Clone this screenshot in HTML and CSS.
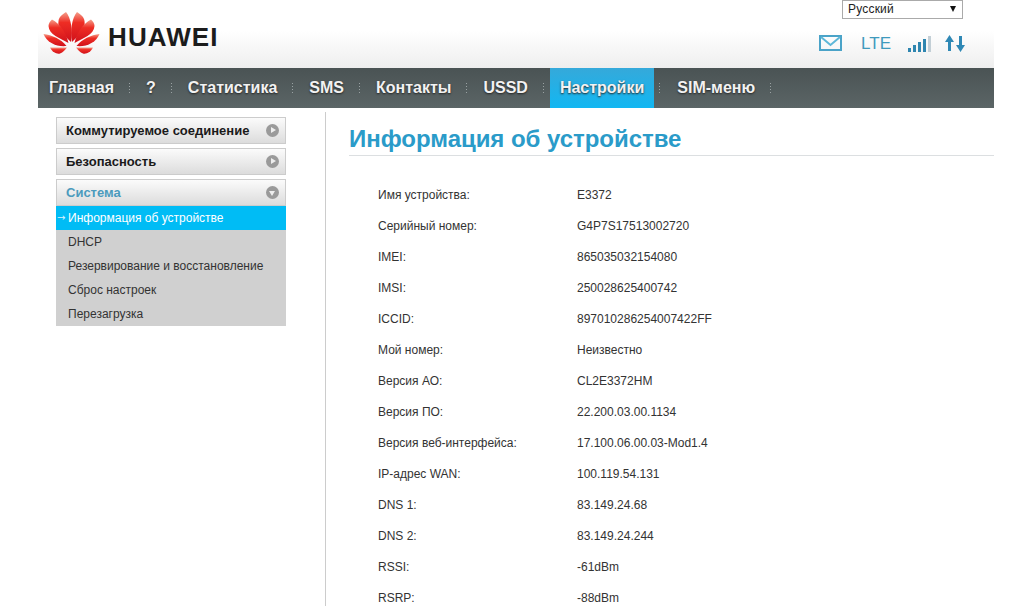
FILE: index.html
```html
<!DOCTYPE html>
<html lang="ru">
<head>
    <meta charset="UTF-8">
    <meta name="viewport" content="width=device-width, initial-scale=1.0">
    <title>Информация об устройстве - HUAWEI</title>
    <link rel="stylesheet" href="styles.css">
</head>
<body>
    <div class="page">
        <header class="header">
            <div class="brand">
                <svg class="logo" width="70" height="55" viewBox="0 0 70 55">
                    <defs>
                        <linearGradient id="petal" x1="0" y1="0" x2="0" y2="1">
                            <stop offset="0" stop-color="#f4a08c"/>
                            <stop offset="0.35" stop-color="#ee2d24"/>
                            <stop offset="1" stop-color="#d0111b"/>
                        </linearGradient>
                        <g id="half" fill="url(#petal)">
                            <path d="M33 37 C26 30 19 24 20.500 16 C21 12 24 9.500 28 7 C33 13 35 25 33 37Z"/>
                            <path d="M30.500 38 C22 33 11 30 10.500 21 C10.500 18.500 12 16.500 14 14.500 C22 19 28 27 30.500 38Z"/>
                            <path d="M28.500 41 C19 42 9 38 5.500 29 C14 30 23 34 28.500 41Z"/>
                            <path d="M29 42.500 L12 42.500 C14 47 19 49.500 22 48.500 C25 47.500 27 45 29 42.500Z"/>
                        </g>
                    </defs>
                    <use href="#half"/>
                    <use href="#half" transform="translate(67 0) scale(-1 1)"/>
                </svg>
                <span class="wordmark">HUAWEI</span>
            </div>
            <div class="tools">
                <div class="lang">
                    <span>Русский</span>
                    <span class="lang-arrow"></span>
                </div>
                <div class="status-icons">
                    <svg class="ico-mail" width="23" height="16" viewBox="0 0 23 16">
                        <rect x="1" y="1" width="21" height="14" fill="none" stroke="#4aa3c8" stroke-width="2"/>
                        <path d="M2 2 L11.500 10 L21 2" fill="none" stroke="#5db7d8" stroke-width="2"/>
                    </svg>
                    <span class="lte">LTE</span>
                    <div class="bars">
                        <i class="bar b1"></i>
                        <i class="bar b2"></i>
                        <i class="bar b3"></i>
                        <i class="bar b4"></i>
                        <i class="bar b5"></i>
                    </div>
                    <svg class="ico-arrows" width="20" height="17" viewBox="0 0 20 17">
                        <path d="M4.500 0 L9 7 H6 V16 H3 V7 H0Z" fill="#2f88b5"/>
                        <path d="M14 1 H17 V10 H20 L15.500 17 L11 10 H14Z" fill="#2f88b5"/>
                    </svg>
                </div>
            </div>
        </header>

        <nav class="nav">
            <a class="nav-item first">Главная</a>
            <a class="nav-item">?</a>
            <a class="nav-item">Статистика</a>
            <a class="nav-item">SMS</a>
            <a class="nav-item">Контакты</a>
            <a class="nav-item">USSD</a>
            <a class="nav-item active">Настройки</a>
            <a class="nav-item">SIM-меню</a>
        </nav>

        <div class="main">
            <aside class="sidebar">
                <div class="menu-btn">Коммутируемое соединение<span class="knob"></span></div>
                <div class="menu-btn">Безопасность<span class="knob"></span></div>
                <div class="menu-btn open">Система<span class="knob down"></span></div>
                <ul class="submenu">
                    <li class="current"><span class="arrow">→</span>Информация об устройстве</li>
                    <li>DHCP</li>
                    <li>Резервирование и восстановление</li>
                    <li>Сброс настроек</li>
                    <li>Перезагрузка</li>
                </ul>
            </aside>

            <section class="content">
                <h1>Информация об устройстве</h1>
                <div class="info">
                    <div>Имя устройства:</div><div>E3372</div>
                    <div>Серийный номер:</div><div>G4P7S17513002720</div>
                    <div>IMEI:</div><div>865035032154080</div>
                    <div>IMSI:</div><div>250028625400742</div>
                    <div>ICCID:</div><div>897010286254007422FF</div>
                    <div>Мой номер:</div><div>Неизвестно</div>
                    <div>Версия АО:</div><div>CL2E3372HM</div>
                    <div>Версия ПО:</div><div>22.200.03.00.1134</div>
                    <div>Версия веб-интерфейса:</div><div>17.100.06.00.03-Mod1.4</div>
                    <div>IP-адрес WAN:</div><div>100.119.54.131</div>
                    <div>DNS 1:</div><div>83.149.24.68</div>
                    <div>DNS 2:</div><div>83.149.24.244</div>
                    <div>RSSI:</div><div>-61dBm</div>
                    <div>RSRP:</div><div>-88dBm</div>
                </div>
            </section>
        </div>
    </div>
</body>
</html>
```

FILE: styles.css
```css
html, body {
    margin: 0;
    height: 606px;
    overflow: hidden;
    background: #fff;
}

body {
    font-family: "Liberation Sans", Arial, sans-serif;
    font-size: 12px;
    color: #333;
}

.page {
    width: 956px;
    margin-left: 38px;
}

.header {
    height: 68px;
    display: flex;
    justify-content: space-between;
    background: linear-gradient(#fff 0%, #fff 45%, #eeeeee 100%);
}

.brand {
    display: flex;
    align-items: flex-start;
}

.logo {
    margin-top: 5px;
}

.wordmark {
    margin-top: 22px;
    font-size: 26px;
    line-height: 30px;
    letter-spacing: 1.1px;
    font-weight: bold;
    color: #1c1c1c;
}

.tools {
    width: 175px;
    display: flex;
    flex-direction: column;
    align-items: flex-end;
    padding-right: 29px;
}

.lang {
    width: 114px;
    height: 15px;
    margin-right: 2px;
    padding: 0 0 2px 5px;
    border: 1px solid #aaa;
    background: #fff;
    display: flex;
    justify-content: space-between;
    align-items: center;
    color: #222;
    font-size: 12px;
    letter-spacing: 0.2px;
}

.lang-arrow {
    width: 0;
    height: 0;
    margin-right: 6px;
    border-left: 3.500px solid transparent;
    border-right: 3.500px solid transparent;
    border-top: 6px solid #111;
}

.status-icons {
    margin-top: 16px;
    display: flex;
    align-items: flex-end;
    height: 17px;
}

.ico-mail {
    margin-bottom: 1px;
}

.lte {
    margin-left: 19px;
    font-size: 17px;
    line-height: 17px;
    color: #3f9abd;
}

.bars {
    margin-left: 17px;
    display: flex;
    align-items: flex-end;
    gap: 2px;
}

.bar {
    display: block;
    width: 3px;
    background: #2f86b0;
}

.b1 { height: 4px; }
.b2 { height: 7px; }
.b3 { height: 10px; }
.b4 { height: 13px; }
.b5 { height: 16px; background: #c3cfd6; }

.ico-arrows {
    margin-left: 14px;
}

.nav {
    height: 40px;
    display: flex;
    align-items: stretch;
    background: linear-gradient(#4a5354, #5b6566);
}

/* dotted separators sit at the right edge of each item */
.nav-item {
    padding: 0 16px 0 16px;
    line-height: 40px;
    font-size: 16px;
    font-weight: bold;
    color: #f2f2f2;
    text-shadow: 0 1px 2px #222;
    background: repeating-linear-gradient(#9aa2a3 0 1px, transparent 1px 3px) right center / 1px 10px no-repeat;
}

.nav-item.first {
    padding-left: 11px;
}

.nav-item.active {
    position: relative;
    margin: 0 7px 0 6px;
    padding: 0 10px;
    background: linear-gradient(#35a9da, #12b7f2);
}

.nav-item.active::after {
    content: "";
    position: absolute;
    right: -6px;
    top: 15px;
    width: 1px;
    height: 10px;
    background: repeating-linear-gradient(#9aa2a3 0 1px, transparent 1px 3px);
}

.main {
    display: flex;
    margin-top: 4px;
}

.sidebar {
    width: 269px;
    padding: 5px 0 0 18px;
    flex-shrink: 0;
}

.menu-btn {
    position: relative;
    width: 230px;
    height: 27px;
    margin-bottom: 4px;
    padding-left: 9px;
    box-sizing: border-box;
    line-height: 25px;
    font-size: 13px;
    font-weight: bold;
    color: #1a1a1a;
    border: 1px solid #ccc;
    background: linear-gradient(#fbfbfb, #dcdcdc);
}

.menu-btn.open {
    margin-bottom: 0;
    color: #4b9bbd;
}

.knob {
    position: absolute;
    right: 6px;
    top: 6px;
    width: 13px;
    height: 13px;
    border-radius: 50%;
    background: #9a9a9a;
}

.knob::after {
    content: "";
    position: absolute;
    left: 5px;
    top: 3px;
    border-left: 5px solid #eee;
    border-top: 3.500px solid transparent;
    border-bottom: 3.500px solid transparent;
}

.knob.down::after {
    left: 3px;
    top: 5px;
    border-top: 5px solid #eee;
    border-bottom: none;
    border-left: 3.500px solid transparent;
    border-right: 3.500px solid transparent;
}

.submenu {
    list-style: none;
    margin: 0;
    padding: 0;
    width: 230px;
    background: #d0d0d0;
}

.submenu li {
    height: 24px;
    line-height: 24px;
    padding-left: 12px;
    color: #333;
    position: relative;
}

.submenu li.current {
    background: #00bcf5;
    color: #fff;
}

.arrow {
    position: absolute;
    left: 1px;
    font-family: "DejaVu Sans", sans-serif;
    font-size: 10px;
    color: #d8f3ff;
}

.content {
    flex: 1;
    border-left: 1px solid #ccc;
    padding: 13px 0 0 23px;
    height: 494px;
}

.content h1 {
    margin: 0;
    height: 30px;
    line-height: 28px;
    font-size: 24px;
    letter-spacing: -0.04px;
    font-weight: bold;
    color: #2a9bc9;
    border-bottom: 1px solid #dcdfe1;
}

.info {
    display: grid;
    grid-template-columns: 199px 1fr;
    grid-auto-rows: 31px;
    align-items: center;
    margin: 23px 0 0 29px;
}
```
